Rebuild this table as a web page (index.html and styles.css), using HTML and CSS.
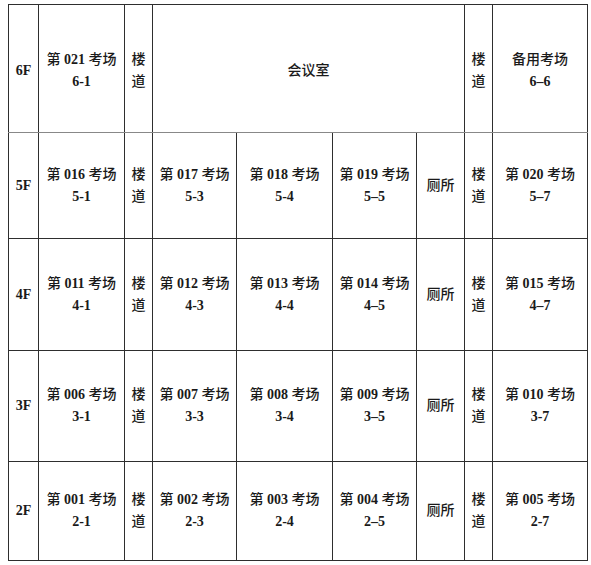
FILE: index.html
```html
<!DOCTYPE html>
<html lang="zh">
<head>
<meta charset="utf-8">
<link rel="stylesheet" href="styles.css">
</head>
<body>
<table class="plan">
  <colgroup>
    <col class="c-floor"><col class="c-a"><col class="c-stair"><col class="c-b"><col class="c-c"><col class="c-d"><col class="c-wc"><col class="c-stair"><col class="c-e">
  </colgroup>
  <tr class="r6">
    <td class="floor">6F</td>
    <td>第 <b>021</b> 考场<br><b>6-1</b></td>
    <td>楼<br>道</td>
    <td colspan="4">会议室</td>
    <td>楼<br>道</td>
    <td>备用考场<br><b>6–6</b></td>
  </tr>
  <tr class="r5">
    <td class="floor">5F</td>
    <td>第 <b>016</b> 考场<br><b>5-1</b></td>
    <td>楼<br>道</td>
    <td>第 <b>017</b> 考场<br><b>5-3</b></td>
    <td>第 <b>018</b> 考场<br><b>5-4</b></td>
    <td>第 <b>019</b> 考场<br><b>5–5</b></td>
    <td>厕所</td>
    <td>楼<br>道</td>
    <td>第 <b>020</b> 考场<br><b>5–7</b></td>
  </tr>
  <tr class="r4">
    <td class="floor">4F</td>
    <td>第 <b>011</b> 考场<br><b>4-1</b></td>
    <td>楼<br>道</td>
    <td>第 <b>012</b> 考场<br><b>4-3</b></td>
    <td>第 <b>013</b> 考场<br><b>4-4</b></td>
    <td>第 <b>014</b> 考场<br><b>4–5</b></td>
    <td>厕所</td>
    <td>楼<br>道</td>
    <td>第 <b>015</b> 考场<br><b>4–7</b></td>
  </tr>
  <tr class="r3">
    <td class="floor">3F</td>
    <td>第 <b>006</b> 考场<br><b>3-1</b></td>
    <td>楼<br>道</td>
    <td>第 <b>007</b> 考场<br><b>3-3</b></td>
    <td>第 <b>008</b> 考场<br><b>3-4</b></td>
    <td>第 <b>009</b> 考场<br><b>3–5</b></td>
    <td>厕所</td>
    <td>楼<br>道</td>
    <td>第 <b>010</b> 考场<br><b>3-7</b></td>
  </tr>
  <tr class="r2">
    <td class="floor">2F</td>
    <td>第 <b>001</b> 考场<br><b>2-1</b></td>
    <td>楼<br>道</td>
    <td>第 <b>002</b> 考场<br><b>2-3</b></td>
    <td>第 <b>003</b> 考场<br><b>2-4</b></td>
    <td>第 <b>004</b> 考场<br><b>2–5</b></td>
    <td>厕所</td>
    <td>楼<br>道</td>
    <td>第 <b>005</b> 考场<br><b>2-7</b></td>
  </tr>
</table>
</body>
</html>
```

FILE: styles.css
```css
html, body {
  margin: 0;
  background: #fff;
}
body {
  padding: 4px 0 0 8px;
}
.plan {
  border-collapse: collapse;
  table-layout: fixed;
  width: 579px;
  font-family: "Liberation Serif", "Noto Sans CJK SC", serif;
  font-size: 14px;
  line-height: 22px;
  color: #1a1a1a;
  border: 1px solid #777;
}
.plan td {
  border: 1px solid #2e2e2e;
  text-align: center;
  vertical-align: middle;
  padding: 0;
  font-weight: 500;
}
.plan b {
  font-weight: bold;
}
.plan .floor {
  font-weight: bold;
}
.c-floor { width: 30px; }
.c-a { width: 86px; }
.c-stair { width: 28px; }
.c-b { width: 84px; }
.c-c { width: 96px; }
.c-d { width: 84px; }
.c-wc { width: 48px; }
.c-e { width: 95px; }
.r6 { height: 128px; }
.r5 { height: 106px; }
.r4 { height: 112px; }
.r3 { height: 111px; }
.r2 { height: 99px; }
.r6 td {
  border-bottom-color: #888;
  padding-top: 4px;
}
```
